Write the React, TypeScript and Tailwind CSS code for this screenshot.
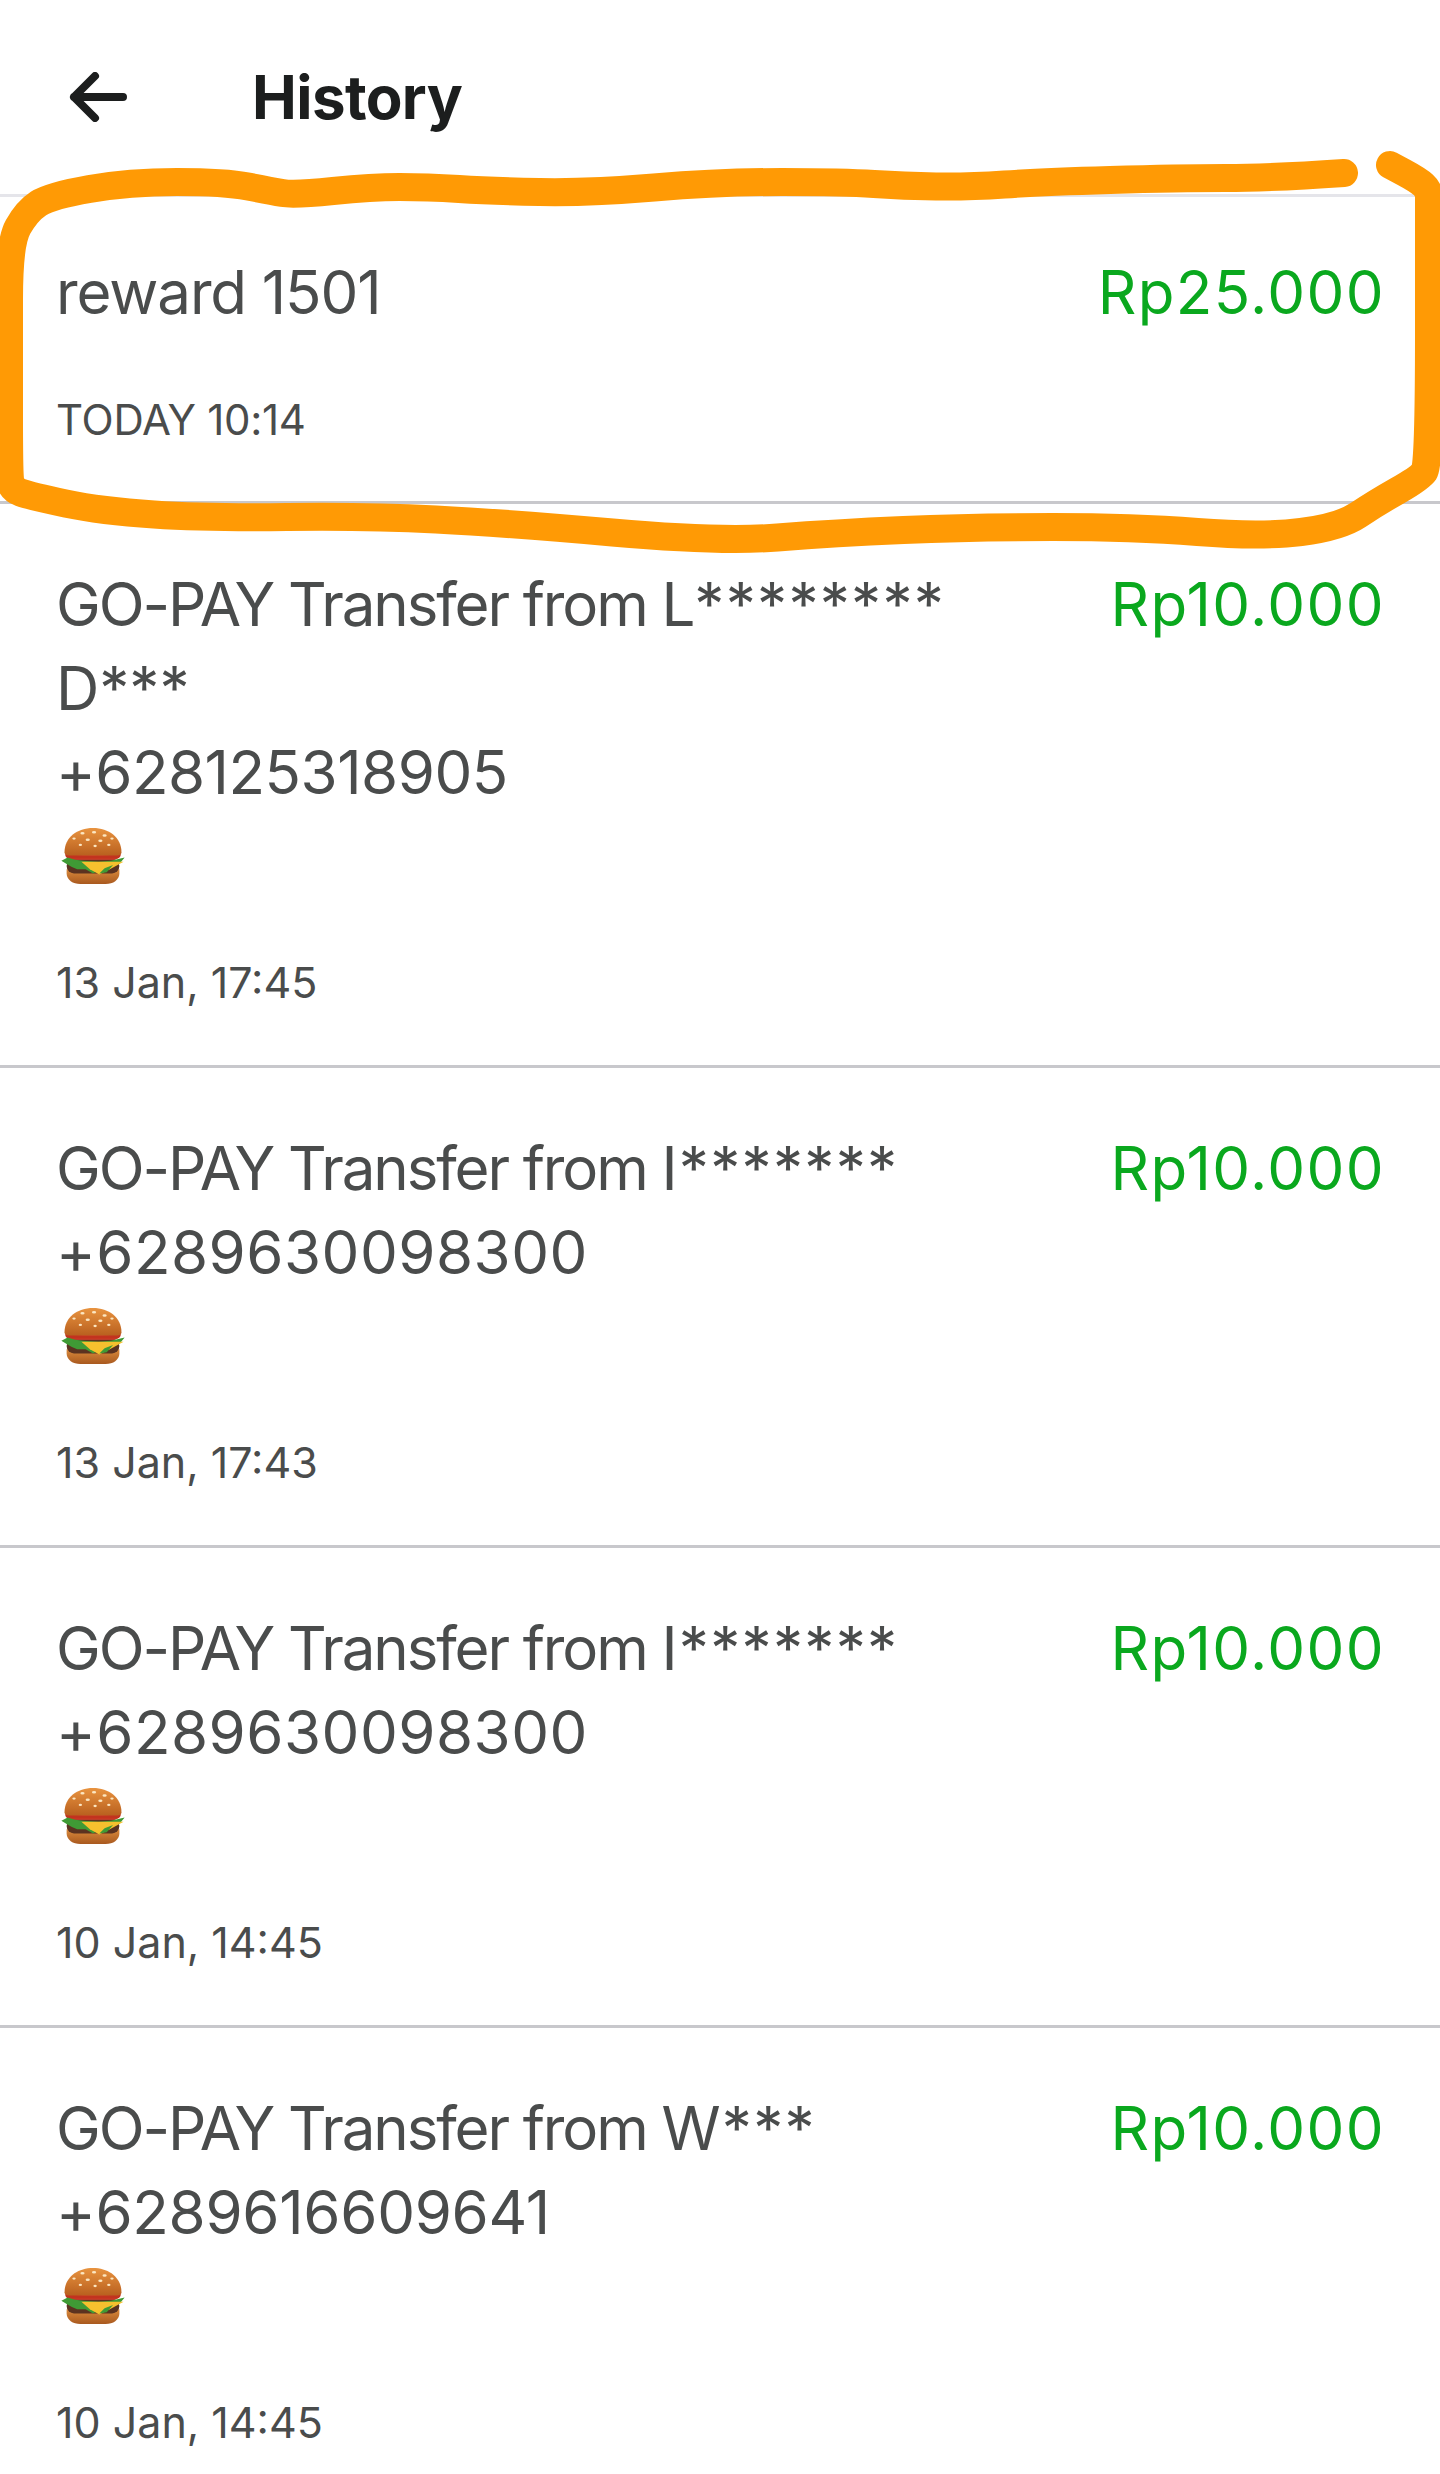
type Row = { title?: string; lines?: string[]; amount: string; date: string; burger: boolean }

const rows: Row[] = [
  { title: "reward 1501", amount: "Rp25.000", date: "TODAY 10:14", burger: false },
  { lines: ["GO-PAY Transfer from L********", "D***", "+628125318905"], amount: "Rp10.000", date: "13 Jan, 17:45", burger: true },
  { lines: ["GO-PAY Transfer from I*******", "+6289630098300"], amount: "Rp10.000", date: "13 Jan, 17:43", burger: true },
  { lines: ["GO-PAY Transfer from I*******", "+6289630098300"], amount: "Rp10.000", date: "10 Jan, 14:45", burger: true },
  { lines: ["GO-PAY Transfer from W***", "+6289616609641"], amount: "Rp10.000", date: "10 Jan, 14:45", burger: true },
]

// marker stroke, traced from the screenshot
const scribble: [number, number][] = [
  [1344, 173], [1271, 178], [1179, 178], [1041, 182], [968, 187], [904, 186], [844, 182], [720, 182],
  [588, 193], [491, 191], [427, 187], [372, 187], [294, 195], [271, 191], [225, 182], [129, 182],
  [50, 196], [27, 211], [9, 243], [9, 357], [9, 470], [11, 489], [30, 496], [101, 511], [207, 518], [367, 516], [505, 523],
  [720, 542], [835, 533], [972, 527], [1133, 527], [1262, 537], [1340, 527], [1376, 503], [1420, 478], [1429, 465],
  [1429, 205], [1429, 190], [1418, 180], [1390, 165],
]

function smoothPath(points: [number, number][]) {
  let d = `M${points[0][0]} ${points[0][1]}`
  for (let i = 1; i < points.length - 1; i++) {
    const [x, y] = points[i]
    const [nx, ny] = points[i + 1]
    d += `Q${x} ${y} ${(x + nx) / 2} ${(y + ny) / 2}`
  }
  const last = points[points.length - 1]
  return d + `L${last[0]} ${last[1]}`
}

function Burger() {
  return (
    <svg width="66" height="58" viewBox="0 0 62 55" className="block">
      <defs>
        <linearGradient id="bun-top" x1="0" y1="0" x2="0" y2="1">
          <stop offset="0" stopColor="#e8933f" />
          <stop offset="1" stopColor="#b9601f" />
        </linearGradient>
        <linearGradient id="bun-bottom" x1="0" y1="0" x2="0" y2="1">
          <stop offset="0" stopColor="#d98a3c" />
          <stop offset="1" stopColor="#a9591f" />
        </linearGradient>
      </defs>
      <path d="M6 40h50v4c0 6-6 10-13 10H19C12 54 6 50 6 44z" fill="url(#bun-bottom)" />
      <rect x="6" y="30" width="50" height="14" rx="7" fill="#5b3220" />
      <path d="M5 21c-1 5 1 9 6 10h40c5-1 7-5 6-10z" fill="#d9412c" />
      <path d="M5 25c-1 3 1 5 4 5h44c3 0 5-2 4-5-6 3-46 3-52 0z" fill="#c2331f" />
      <path d="M1 32l6-3 7 2 8 1 14 1 12-1 13-3-5 6-8 2-5 5-6-1-6 3-7-4-8 0-5-2-5-3z" fill="#3f9a35" />
      <path d="M20 33h40l-13 7-10 5-9-5z" fill="#f6c02e" />
      <path d="M50 36l-6 7-7 1 5-5z" fill="#3f9a35" />
      <path d="M4 24C4 10 16 1 31 1s27 9 27 23c0 2-2 3-4 3H8c-2 0-4-1-4-3z" fill="url(#bun-top)" />
      <g fill="#fbe6c2">
        <ellipse cx="21" cy="6" rx="2" ry="1.2" />
        <ellipse cx="32" cy="5" rx="2" ry="1.2" />
        <ellipse cx="42" cy="8" rx="2" ry="1.2" />
        <ellipse cx="49" cy="11" rx="1.6" ry="1.1" />
        <ellipse cx="13" cy="11" rx="1.6" ry="1.1" />
        <ellipse cx="26" cy="12" rx="2" ry="1.2" />
        <ellipse cx="38" cy="13" rx="2" ry="1.2" />
        <ellipse cx="19" cy="17" rx="1.6" ry="1.1" />
        <ellipse cx="33" cy="18" rx="1.6" ry="1.1" />
        <ellipse cx="46" cy="17" rx="1.6" ry="1.1" />
      </g>
    </svg>
  )
}

function TitleLine({ text }: { text: string }) {
  if (text === "+628125318905") return <div className="tracking-[-0.5px]">{text}</div>
  if (text === "+6289616609641") return <div className="tracking-[-0.3px]">{text}</div>
  if (text.startsWith("+")) return <div className="tracking-[0.5px]">{text}</div>
  if (text.startsWith("GO-PAY")) {
    const at = text.indexOf("from ") + 5
    return (
      <div>
        <span className="tracking-[-2.1px]">{text.slice(0, at)}</span>
        <span className="tracking-[1.3px]">{text.slice(at)}</span>
      </div>
    )
  }
  return <div>{text}</div>
}

function HistoryRow({ row, first }: { row: Row; first: boolean }) {
  return (
    <div className={first ? "border-y-[3px] border-t-[#e5e5ea] border-b-[#c8c8cc]" : "border-b-[3px] border-[#c8c8cc]"}>
      <div className={first ? "pl-[56px] pr-[55px] pt-[53px] pb-[53px]" : "pl-[56px] pr-[55px] pt-[58px] pb-[55px]"}>
        <div className="flex items-start justify-between">
          <div className="text-[60px] leading-[84px] text-[#4a4c4c]">
            {row.title && <div className="tracking-[-1.1px]">{row.title}</div>}
            {row.lines?.map((line, i) => (
              <TitleLine key={i} text={line} />
            ))}
            {row.burger && (
              <div className="flex h-[84px] items-center pl-[4px]">
                <Burger />
              </div>
            )}
          </div>
          <div className="text-[60px] leading-[84px] tracking-[1.4px] text-[#0aa81e]">{row.amount}</div>
        </div>
        <div className={first ? "mt-[58px] text-[42px] leading-[56px] tracking-[-0.3px] text-[#4a4c4c]" : "mt-[56px] text-[43px] leading-[56px] text-[#4a4c4c]"}>{row.date}</div>
      </div>
    </div>
  )
}

export default function App() {
  return (
    <div className="relative h-[2474px] w-[1440px] overflow-hidden bg-white font-['Inter',sans-serif]">
      <header className="flex h-[194px] items-center pl-[69px]">
        <svg width="58" height="50" viewBox="0 0 58 50" fill="none" stroke="#1c1e1e" strokeWidth="8" strokeLinecap="round" strokeLinejoin="round">
          <path d="M54 25H5M26 4L5 25l21 21" />
        </svg>
        <h1 className="ml-[125px] text-[60px] font-bold leading-none tracking-[-0.6px] text-[#1c1e1e]">History</h1>
      </header>
      {rows.map((row, i) => (
        <HistoryRow key={i} row={row} first={i === 0} />
      ))}
      {/* marker scribble drawn over the first row */}
      <svg className="absolute left-0 top-0" width="1440" height="600" fill="none" stroke="#ff9a05" strokeWidth="28" strokeLinecap="round" strokeLinejoin="round">
        <path d={smoothPath(scribble)} />
      </svg>
    </div>
  )
}
